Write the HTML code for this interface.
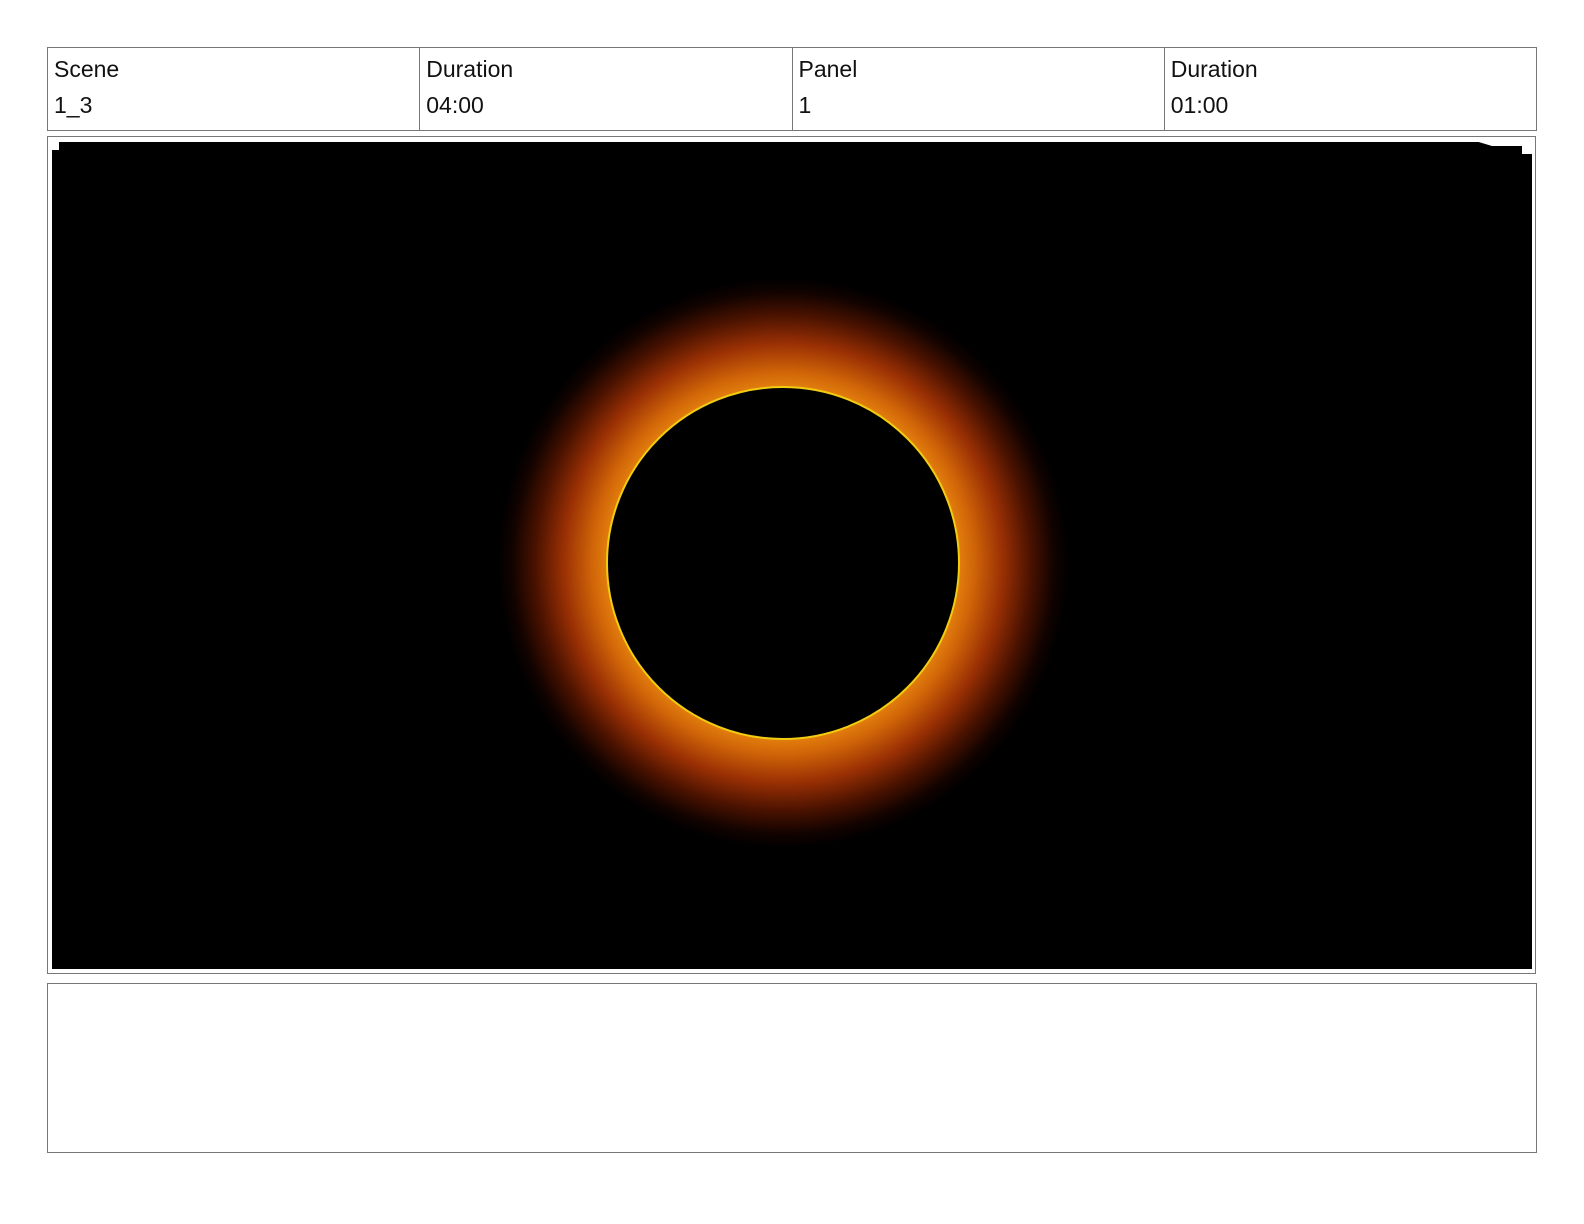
<!DOCTYPE html>
<html><head><meta charset="utf-8"><style>
html,body{margin:0;padding:0;background:#fff;}
body{width:1584px;height:1224px;position:relative;overflow:hidden;font-family:"Liberation Sans","DejaVu Sans",sans-serif;}
.hdr{position:absolute;left:47px;top:47px;width:1488px;height:82px;border:1px solid #777;display:flex;box-sizing:content-box;}
.c{flex:1;border-left:1px solid #777;padding-left:6px;color:#111;font-size:23px;}
.c:first-child{border-left:none;}
.c div{height:36px;line-height:36px;}
.c div:first-child{margin-top:3px;}
.frame{position:absolute;left:47px;top:136px;width:1487px;height:836px;border:1px solid #777;}
.blk{position:absolute;left:52px;top:140px;width:1480px;height:829px;background:#000;overflow:hidden;}
.notes{position:absolute;left:47px;top:983px;width:1488px;height:168px;border:1px solid #777;}
</style></head><body>
<div class="hdr">
<div class="c"><div>Scene</div><div>1_3</div></div>
<div class="c"><div>Duration</div><div>04:00</div></div>
<div class="c"><div>Panel</div><div>1</div></div>
<div class="c"><div>Duration</div><div>01:00</div></div>
</div>
<div class="frame"></div>
<div class="blk">
<svg width="1480" height="829" style="position:absolute;left:0;top:0">
<defs>
<radialGradient id="g" cx="731" cy="423" r="285" gradientUnits="userSpaceOnUse">
<stop offset="0.6" stop-color="#e8860f"/>
<stop offset="0.67" stop-color="#d06508"/>
<stop offset="0.77" stop-color="#9a3004"/>
<stop offset="0.87" stop-color="#4a1200"/>
<stop offset="0.95" stop-color="#120300"/>
<stop offset="1" stop-color="#000"/>
</radialGradient>
</defs>
<rect x="0" y="0" width="1480" height="2" fill="#fff"/>
<path d="M0 0 H7 V10 H0 Z" fill="#fff"/>
<path d="M1420 0 H1480 V14 H1470 V6 H1440 Z" fill="#fff"/>
<circle cx="731" cy="423" r="290" fill="url(#g)"/>
<circle cx="731" cy="423" r="176" fill="#000" stroke="#f2cc10" stroke-width="2"/>
</svg>
</div>
<div class="notes"></div>
</body></html>
